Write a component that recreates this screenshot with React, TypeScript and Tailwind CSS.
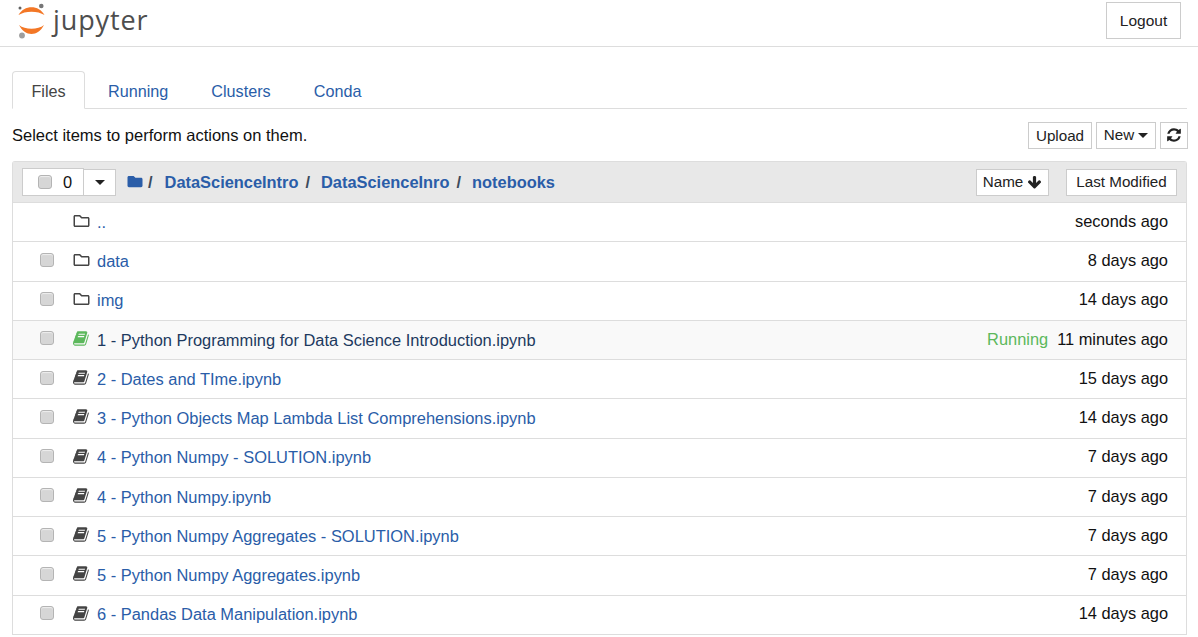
import React from 'react';
import { FaFolder, FaRegFolder } from 'react-icons/fa';

const BOOK =
  'M1639 478q40 57 18 129l-275 906q-19 64-76.5 107.5t-122.5 43.5h-923q-77 0-148.5-53.5t-99.5-131.5q-24-67-2-127 0-4 3-27t4-37q1-8-3-21.5t-3-19.5q2-11 8-21t16.5-23.5 16.5-23.5q23-38 45-91.5t30-91.5q3-10 .5-30t-.5-28q3-11 17-28t17-23q21-36 42-92t25-90q1-9-2.5-32t.5-28q4-13 22-30.5t22-22.5q19-26 42.5-84.5t27.5-96.5q1-8-3-25.5t-2-26.5q2-8 9-18t18-23 17-21q8-12 16.5-30.5t15-35 16-36 19.5-32 26.5-23.5 36-11.5 47.5 5.5l-1 3q38-9 51-9h761q74 0 114 56t18 130l-274 906q-36 119-71.5 153.5t-128.5 34.5h-869q-27 0-38 15-11 16-1 43 24 70 144 70h923q29 0 56-15.5t35-41.5l300-987q7-22 5-57 38 15 59 43zm-1064 2q-4 13 2 22.5t20 9.5h608q13 0 25.5-9.5t16.5-22.5l21-64q4-13-2-22.5t-20-9.5h-608q-13 0-25.5 9.5t-16.5 22.5zm-83 256q-4 13 2 22.5t20 9.5h608q13 0 25.5-9.5t16.5-22.5l21-64q4-13-2-22.5t-20-9.5h-608q-13 0-25.5 9.5t-16.5 22.5z';
const REFRESH =
  'M1639 1056q0 5-1 7-64 268-268 434.5t-478 166.5q-146 0-282.5-55t-243.5-157l-129 129q-19 19-45 19t-45-19-19-45v-448q0-26 19-45t45-19h448q26 0 45 19t19 45-19 45l-137 137q71 66 161 102t187 36q134 0 250-65t186-179q11-17 53-117 8-23 30-23h192q13 0 22.5 9.5t9.5 22.5zm25-800v448q0 26-19 45t-45 19h-448q-26 0-45-19t-19-45 19-45l138-138q-148-137-349-137-134 0-250 65t-186 179q-11 17-53 117-8 23-30 23h-199q-13 0-22.5-9.5t-9.5-22.5v-7q65-268 270-434.5t480-166.5q146 0 284 55.5t245 156.5l130-129q19-19 45-19t45 19 19 45z';
const ARROW =
  'M1675 832q0 53-37 90l-651 652q-39 37-91 37-53 0-90-37l-651-652q-38-36-38-90 0-53 38-91l74-75q39-37 91-37 53 0 90 37l294 294v-704q0-52 38-90t90-38h128q52 0 90 38t38 90v704l294-294q37-37 90-37 52 0 91 37l75 75q37 39 37 91z';

type Row = {
  name: string;
  time: string;
  kind: 'folder' | 'book';
  running?: boolean;
  noCheck?: boolean;
};

const rows: Row[] = [
  { name: '..', time: 'seconds ago', kind: 'folder', noCheck: true },
  { name: 'data', time: '8 days ago', kind: 'folder' },
  { name: 'img', time: '14 days ago', kind: 'folder' },
  { name: '1 - Python Programming for Data Science Introduction.ipynb', time: '11 minutes ago', kind: 'book', running: true },
  { name: '2 - Dates and TIme.ipynb', time: '15 days ago', kind: 'book' },
  { name: '3 - Python Objects Map Lambda List Comprehensions.ipynb', time: '14 days ago', kind: 'book' },
  { name: '4 - Python Numpy - SOLUTION.ipynb', time: '7 days ago', kind: 'book' },
  { name: '4 - Python Numpy.ipynb', time: '7 days ago', kind: 'book' },
  { name: '5 - Python Numpy Aggregates - SOLUTION.ipynb', time: '7 days ago', kind: 'book' },
  { name: '5 - Python Numpy Aggregates.ipynb', time: '7 days ago', kind: 'book' },
  { name: '6 - Pandas Data Manipulation.ipynb', time: '14 days ago', kind: 'book' },
];

const Check = () => (
  <span className="block w-[14px] h-[14px] rounded-[3px] border border-[#b4b4b4] bg-[#d6d6d6] shadow-[inset_0_1px_1px_rgba(255,255,255,0.6)]" />
);

const Caret = () => (
  <svg width="10" height="5" viewBox="0 0 10 5" className="shrink-0" fill="#222">
    <path d="M0 0h10L5 5z" />
  </svg>
);

const Logo = () => (
  <svg width="32" height="38" viewBox="16 2 32 38" className="shrink-0">
    <path d="M18.5 15 C24 4.5 39 4.5 44.5 15 C38 10.5 25 10.5 18.5 15 Z" fill="#f37726" />
    <path d="M19 25 C25 37 38 37 44 25 C38 30 25 30 19 25 Z" fill="#f37726" />
    <circle cx="41.3" cy="6" r="2.3" fill="#767677" />
    <circle cx="20" cy="8" r="1.5" fill="#616262" />
    <circle cx="22" cy="35.5" r="2.9" fill="#9e9e9e" />
  </svg>
);

const Btn = ({ children, className = '' }: { children: React.ReactNode; className?: string }) => (
  <button
    type="button"
    className={`flex items-center justify-center bg-white border border-[#cccccc] text-[15.2px] text-[#222] ${className}`}
  >
    {children}
  </button>
);

const FileRow = ({ row }: { row: Row }) => (
  <div className={`flex items-center h-[39.25px] border-b border-[#dddddd] pr-[18px] pb-[2px] ${row.running ? 'bg-[#f9f9f9]' : ''}`}>
    <div className="w-[60px] pl-[27px] shrink-0 -mt-[1px]">{!row.noCheck && <Check />}</div>
    <div className="w-[24px] shrink-0 -mt-[1px]">
      {row.kind === 'folder' ? (
        <FaRegFolder className="w-[17px] h-[16px] text-[#444]" />
      ) : (
        <svg viewBox="0 0 1792 1792" className={`w-[17px] h-[17px] ${row.running ? 'text-[#5cb85c]' : 'text-[#444]'}`} fill="currentColor">
          <path d={BOOK} />
        </svg>
      )}
    </div>
    <span className={`text-[16.45px] translate-y-[1px] ${row.running ? 'text-[#1d3a5f]' : 'text-[#2a5da8]'}`}>{row.name}</span>
    <div className="ml-auto flex items-center text-[16.4px] text-[#111]">
      {row.running && <span className="text-[#5cb85c] mr-[9px]">Running</span>}
      <span>{row.time}</span>
    </div>
  </div>
);

export default function App() {
  return (
    <div className="h-screen overflow-hidden bg-white font-['Liberation_Sans',Arial,sans-serif] text-[#111]">
      <header className="flex justify-between h-[47px] border-b border-[#dddddd] pl-[16px] pr-[17px] pt-[2px]">
        <div className="flex items-start gap-[5px]">
          <Logo />
          <span className="font-['Open_Sans',sans-serif] text-[27px] leading-[36px] tracking-[0.9px] text-[#4e4e4e]">jupyter</span>
        </div>
        <Btn className="w-[75px] h-[37px] text-[15.5px]">Logout</Btn>
      </header>

      <main className="px-[12px] pr-[11px]">
        <nav className="flex items-end h-[62px] border-b border-[#dddddd] text-[16.2px] text-[#2a5da8]">
          <div className="flex items-center justify-center w-[73px] h-[38px] -mb-px pt-[3px] bg-white border border-[#dddddd] border-b-white rounded-t-[4px] text-[#444]">Files</div>
          <div className="flex items-center h-[37px] pt-[3px] ml-[23px]">Running</div>
          <div className="flex items-center h-[37px] pt-[3px] ml-[43px]">Clusters</div>
          <div className="flex items-center h-[37px] pt-[3px] ml-[43px]">Conda</div>
        </nav>

        <div className="flex items-center justify-between h-[52px]">
          <span className="text-[16.5px] -translate-y-[0.5px]">Select items to perform actions on them.</span>
          <div className="flex items-center -mr-[1px]">
            <Btn className="w-[64px] h-[27px] mr-[4px] pt-[2px]">Upload</Btn>
            <Btn className="w-[60px] h-[27px] mr-[4px] gap-[4px] pt-[1px]">
              New <Caret />
            </Btn>
            <Btn className="w-[28px] h-[27px]">
              <svg viewBox="0 0 1792 1792" className="w-[16px] h-[16px]" fill="currentColor">
                <path d={REFRESH} />
              </svg>
            </Btn>
          </div>
        </div>

        <section className="border-x border-t border-[#dddddd] rounded-t-[3px]">
          <div className="flex items-center h-[41px] bg-[#e8e8e8] border-b border-[#dddddd] pl-[9px] pr-[9px]">
            <div className="flex items-center w-[62px] h-[28px] bg-white border border-[#cccccc] pl-[15px] gap-[11px] text-[16.4px]">
              <Check />
              <span>0</span>
            </div>
            <div className="flex items-center justify-center w-[33px] h-[27px] -ml-px bg-white border border-[#cccccc]">
              <Caret />
            </div>
            <FaFolder className="w-[16px] h-[15px] ml-[11px] text-[#2a5da8] -mt-[2px]" />
            <span className="ml-[5px] text-[16.4px] font-bold text-[#3c4b5c]">/</span>
            <span className="ml-[12px] text-[16.4px] font-bold text-[#2a5da8]">DataScienceIntro</span>
            <span className="ml-[7px] text-[16.4px] font-bold text-[#3c4b5c]">/</span>
            <span className="ml-[11px] text-[16.4px] font-bold text-[#2a5da8]">DataScienceInro</span>
            <span className="ml-[7px] text-[16.4px] font-bold text-[#3c4b5c]">/</span>
            <span className="ml-[11px] text-[16.4px] font-bold text-[#2a5da8]">notebooks</span>
            <Btn className="ml-auto w-[73px] h-[27px] gap-[4px] pt-[1px]">
              Name
              <svg viewBox="0 0 1792 1792" className="w-[15px] h-[15px]" fill="currentColor">
                <path d={ARROW} />
              </svg>
            </Btn>
            <Btn className="ml-[17px] w-[111px] h-[27px] pt-[1px]">Last Modified</Btn>
          </div>
          {rows.map((row) => (
            <FileRow key={row.name} row={row} />
          ))}
        </section>
      </main>
    </div>
  );
}
